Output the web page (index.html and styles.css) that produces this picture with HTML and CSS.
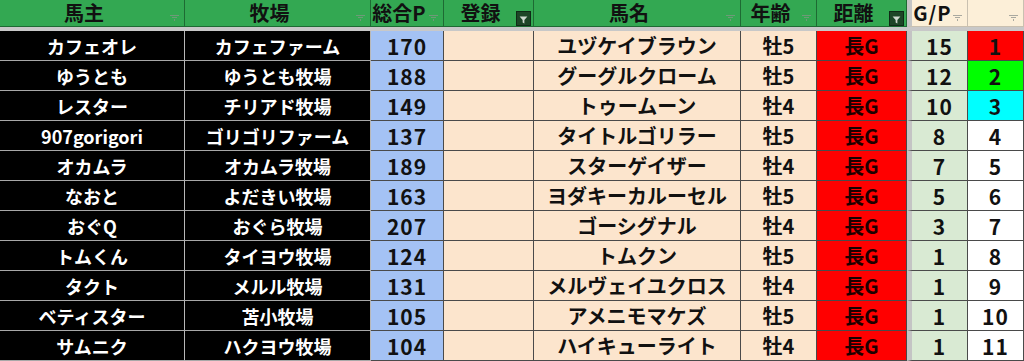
FILE: index.html
```html
<!DOCTYPE html>
<html lang="ja">
<head>
<meta charset="utf-8">
<link rel="stylesheet" href="styles.css">
</head>
<body>
<div class="sheet">
  <div class="hd">馬主<span class="dd"></span></div>
  <div class="hd">牧場<span class="dd"></span></div>
  <div class="hd">総合P<span class="dd"></span></div>
  <div class="hd">登録<span class="fb"><svg width="15" height="15" viewBox="0 0 15 15"><path d="M3 4h9l-3.5 4v4l-2-1V8z" fill="#cfd8cf"/></svg></span></div>
  <div class="hd">馬名<span class="dd"></span></div>
  <div class="hd">年齢<span class="dd"></span></div>
  <div class="hd">距離<span class="fb"><svg width="15" height="15" viewBox="0 0 15 15"><path d="M3 4h9l-3.5 4v4l-2-1V8z" fill="#cfd8cf"/></svg></span></div>
  <div class="hd hd-lt gp">G/P<span class="dd"></span></div>
  <div class="hd hd-lt"><span class="dd"></span></div>
  <div class="band"></div>

  <div class="c own">カフェオレ</div><div class="c own">カフェファーム</div><div class="c pt">170</div><div class="c reg"></div><div class="c nm">ユヅケイブラウン</div><div class="c age">牡5</div><div class="c dist">長G</div><div class="c gpv">15</div><div class="c rk r1">1</div>
  <div class="c own">ゆうとも</div><div class="c own">ゆうとも牧場</div><div class="c pt">188</div><div class="c reg"></div><div class="c nm">グーグルクローム</div><div class="c age">牡5</div><div class="c dist">長G</div><div class="c gpv">12</div><div class="c rk r2">2</div>
  <div class="c own">レスター</div><div class="c own">チリアド牧場</div><div class="c pt">149</div><div class="c reg"></div><div class="c nm">トゥームーン</div><div class="c age">牡4</div><div class="c dist">長G</div><div class="c gpv">10</div><div class="c rk r3">3</div>
  <div class="c own">907gorigori</div><div class="c own">ゴリゴリファーム</div><div class="c pt">137</div><div class="c reg"></div><div class="c nm">タイトルゴリラー</div><div class="c age">牡5</div><div class="c dist">長G</div><div class="c gpv">8</div><div class="c rk">4</div>
  <div class="c own">オカムラ</div><div class="c own">オカムラ牧場</div><div class="c pt">189</div><div class="c reg"></div><div class="c nm">スターゲイザー</div><div class="c age">牡4</div><div class="c dist">長G</div><div class="c gpv">7</div><div class="c rk">5</div>
  <div class="c own">なおと</div><div class="c own">よだきい牧場</div><div class="c pt">163</div><div class="c reg"></div><div class="c nm">ヨダキーカルーセル</div><div class="c age">牡5</div><div class="c dist">長G</div><div class="c gpv">5</div><div class="c rk">6</div>
  <div class="c own">おぐQ</div><div class="c own">おぐら牧場</div><div class="c pt">207</div><div class="c reg"></div><div class="c nm">ゴーシグナル</div><div class="c age">牡4</div><div class="c dist">長G</div><div class="c gpv">3</div><div class="c rk">7</div>
  <div class="c own">トムくん</div><div class="c own">タイヨウ牧場</div><div class="c pt">124</div><div class="c reg"></div><div class="c nm">トムクン</div><div class="c age">牡5</div><div class="c dist">長G</div><div class="c gpv">1</div><div class="c rk">8</div>
  <div class="c own">タクト</div><div class="c own">メルル牧場</div><div class="c pt">131</div><div class="c reg"></div><div class="c nm">メルヴェイユクロス</div><div class="c age">牡4</div><div class="c dist">長G</div><div class="c gpv">1</div><div class="c rk">9</div>
  <div class="c own">ベティスター</div><div class="c own">苫小牧場</div><div class="c pt">105</div><div class="c reg"></div><div class="c nm">アメニモマケズ</div><div class="c age">牡5</div><div class="c dist">長G</div><div class="c gpv">1</div><div class="c rk">10</div>
  <div class="c own">サムニク</div><div class="c own">ハクヨウ牧場</div><div class="c pt">104</div><div class="c reg"></div><div class="c nm">ハイキューライト</div><div class="c age">牡4</div><div class="c dist">長G</div><div class="c gpv">1</div><div class="c rk">11</div>
</div>
</body>
</html>
```

FILE: styles.css
```css
* { box-sizing: border-box; }
html, body { margin: 0; padding: 0; background: #ffffff; overflow: hidden; }
body { width: 1024px; height: 361px; }

.sheet {
  display: grid;
  grid-template-columns: 185px 186px 73px 90px 207px 76px 90px 61px 56px;
  grid-template-rows: 27px 4px repeat(11, 30px);
  font-family: "Noto Sans CJK JP", "Noto Sans", sans-serif;
  font-weight: 700;
  color: #111;
}

.hd {
  position: relative;
  background: #33a852;
  border-right: 1px solid #1e6a33;
  border-bottom: 1px solid #1e6a33;
  font-size: 20px;
  line-height: 26px;
  text-align: center;
  padding-right: 16px;
  white-space: nowrap;
}
.hd-lt { background: #fcefd8; border-right: 1px solid #c9c0b0; border-bottom: 1px solid #c9c0b0; }
.gp { border-left: 5px solid #c4c4c4; padding-right: 14px; letter-spacing: 1px; }

.dd {
  position: absolute;
  right: 5px;
  bottom: 5px;
  width: 9px;
  height: 6px;
  background:
    linear-gradient(#6e9a78, #6e9a78) 0 0 / 9px 1px no-repeat,
    linear-gradient(#6e9a78, #6e9a78) 2px 2px / 5px 1px no-repeat,
    linear-gradient(#6e9a78, #6e9a78) 4px 4px / 1px 2px no-repeat;
}
.hd-lt .dd {
  background:
    linear-gradient(#a9a9a0, #a9a9a0) 0 0 / 9px 1px no-repeat,
    linear-gradient(#a9a9a0, #a9a9a0) 2px 2px / 5px 1px no-repeat,
    linear-gradient(#a9a9a0, #a9a9a0) 4px 4px / 1px 2px no-repeat;
}
.fb {
  position: absolute;
  right: 2px;
  bottom: 0;
  width: 15px;
  height: 15px;
  background: #1d4527;
  border: 1px solid #0f2a16;
  display: flex;
}
.fb svg { display: block; }

.band { grid-column: 1 / -1; background: #c8c8c8; }

.c {
  font-size: 19px;
  line-height: 30px;
  text-align: center;
  white-space: nowrap;
  overflow: hidden;
  border-right: 1px solid #4a4a4a;
  border-bottom: 1px solid #4a4a4a;
}
.own { background: #000; color: #fff; font-size: 18px; border-right-color: #b8b8b8; border-bottom-color: #a8a8a8; }
.pt { background: #a4c2f4; color: #111; font-size: 21px; letter-spacing: 1px; }
.reg, .nm, .age { background: #fce5cd; }
.nm { font-size: 20px; }
.age { font-size: 20px; }
.dist { background: #ff0000; color: #1c0000; font-size: 20px; }
.gpv { background: #d9ead3; border-left: 5px solid #c4c4c4; font-size: 21px; letter-spacing: 1px; }
.rk { background: #ffffff; font-size: 21px; letter-spacing: 1px; }
.r1 { background: #ff0000; }
.r2 { background: #00ff00; }
.r3 { background: #00ffff; }
```
